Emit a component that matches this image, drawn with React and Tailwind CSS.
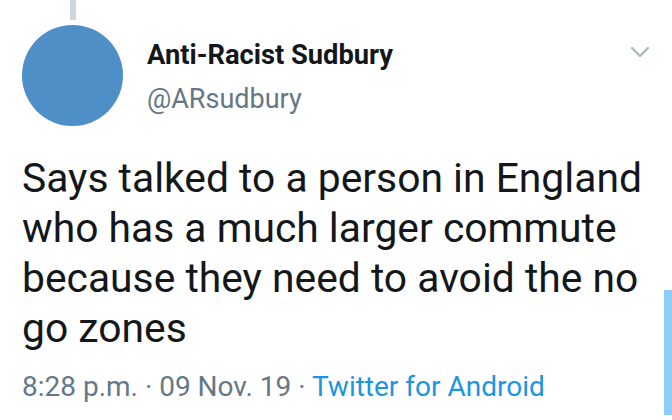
import React from 'react';

export default function App() {
  return (
    <div
      className="relative w-[672px] h-[420px] overflow-hidden bg-white text-[#14171a]"
      style={{ fontFamily: 'Roboto, "Noto Sans", sans-serif' }}
    >
      {/* Header */}
      <div className="flex items-start pl-[22px] pr-[22px]">
        <div className="flex flex-col items-center w-[101px]">
          <div className="w-[6px] h-[20px] bg-[#ccd6dd]" />
          <div className="mt-[5px] w-[101px] h-[101px] rounded-full bg-[#4f8fc7]" />
        </div>
        <div className="ml-[24px] pt-[40px] flex-1">
          <div className="text-[27.3px] leading-[30px] font-bold">Anti-Racist Sudbury</div>
          <div className="mt-[14px] text-[27px] leading-[30px] text-[#657786]">@ARsudbury</div>
        </div>
        <svg className="mt-[45px]" width="20" height="14" viewBox="0 0 20 14" fill="none">
          <path d="M2 3 L10 11 L18 3" stroke="#aab8c2" strokeWidth="2.4" strokeLinecap="round" strokeLinejoin="round" />
        </svg>
      </div>

      {/* Tweet text */}
      <div className="px-[22px] mt-[27px] text-[40.8px] leading-[50px]">
        Says talked to a person in England who has a much larger commute because they need to avoid the no go zones
      </div>

      {/* Meta */}
      <div className="px-[22px] mt-[16px] text-[28px] leading-[36px] text-[#657786]">
        8:28 p.m. · 09 Nov. 19 · <span className="text-[#1b95e0]">Twitter for Android</span>
      </div>

      <div className="absolute right-0 top-[290px] w-[8px] h-[125px] bg-[#8ecdf5]" />
    </div>
  );
}
